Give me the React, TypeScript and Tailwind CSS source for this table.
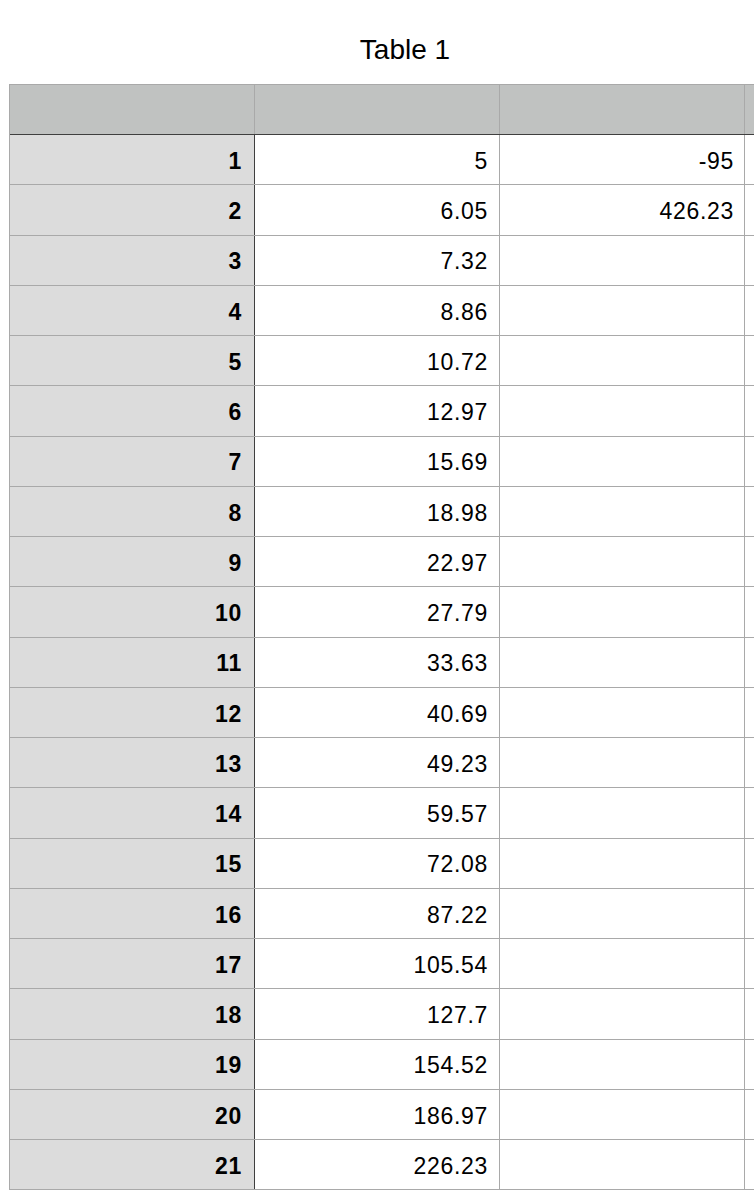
const colB = [5, 6.05, 7.32, 8.86, 10.72, 12.97, 15.69, 18.98, 22.97, 27.79, 33.63, 40.69, 49.23, 59.57, 72.08, 87.22, 105.54, 127.7, 154.52, 186.97, 226.23]
const colC: Record<number, string> = { 0: "-95", 1: "426.23" }

export default function App() {
  return (
    <div className="min-h-[1202px] w-[754px] overflow-hidden bg-white font-['Liberation_Sans',Arial,sans-serif] text-black">
      <h1 className="pt-[31px] pb-[15px] text-center text-[28px] leading-[38px] pl-[56px]">Table 1</h1>

      <div className="ml-[9px] w-[800px] border-t border-l border-[#a9a9a9]">
        {/* header row */}
        <div className="flex h-[50px] border-b border-[#3f3f3f] bg-[#c0c2c1]">
          <div className="w-[245px] shrink-0 border-r border-[#a9a9a9]" />
          <div className="w-[245px] shrink-0 border-r border-[#a9a9a9]" />
          <div className="w-[245px] shrink-0 border-r border-[#a9a9a9]" />
          <div className="flex-1" />
        </div>

        {colB.map((v, i) => (
          <div key={i} className="flex h-[50.25px] border-b border-[#a9a9a9] text-[23px] tracking-[0.7px]">
            <div className="flex w-[245px] shrink-0 items-center justify-end border-r border-[#3f3f3f] bg-[#dcdcdc] pt-[3px] pr-[12px] font-bold">
              {i + 1}
            </div>
            <div className="flex w-[245px] shrink-0 items-center justify-end border-r border-[#a9a9a9] pt-[3px] pr-[11px]">
              {v}
            </div>
            <div className="flex w-[245px] shrink-0 items-center justify-end border-r border-[#a9a9a9] pt-[3px] pr-[10px]">
              {colC[i] ?? ""}
            </div>
            <div className="flex-1" />
          </div>
        ))}
      </div>
    </div>
  )
}
